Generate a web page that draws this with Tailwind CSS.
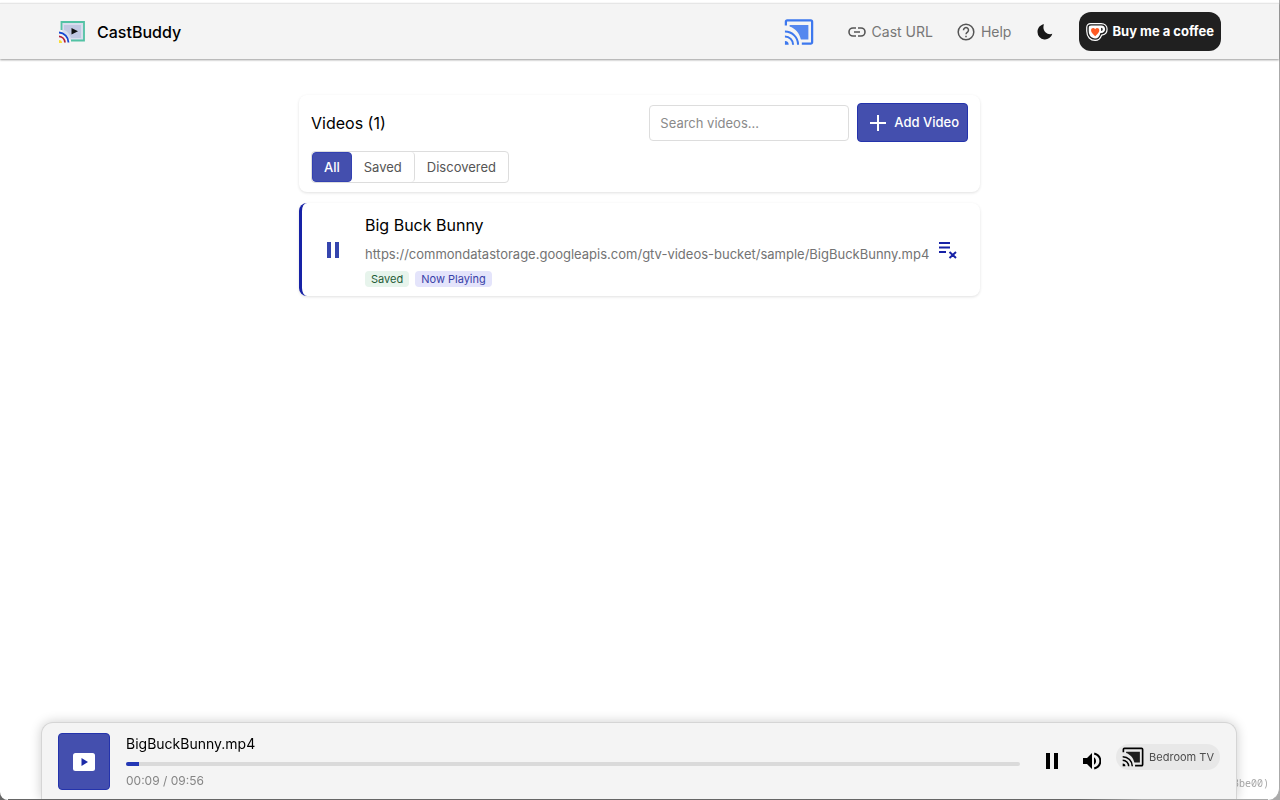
<!DOCTYPE html>
<html lang="en">
<head>
<meta charset="utf-8">
<meta name="viewport" content="width=device-width, initial-scale=1">
<title>CastBuddy</title>
<script src="https://cdn.jsdelivr.net/npm/@tailwindcss/browser@4"></script>
</head>
<body class="bg-linear-to-r from-[#666666] from-85% to-[#aaaaaa] to-90% font-['Inter',sans-serif] text-black">
<svg class="hidden">
  <symbol id="cast" viewBox="0 0 32 28">
    <path d="M2 7V3a1.500 1.500 0 0 1 1.500-1.500h25A1.500 1.500 0 0 1 30 3v22a1.500 1.500 0 0 1-1.500 1.500H19" fill="none" stroke="currentColor" stroke-width="2.400"/>
    <path d="M6 6.500h20V22h-8C16.500 15 12 10 6 8Z" fill="currentColor" opacity=".88"/>
    <path d="M1 23.500a4 4 0 0 1 4 4H1Z" fill="currentColor"/>
    <path d="M1 18.800a8.700 8.700 0 0 1 8.700 8.700M1 13.500a14 14 0 0 1 14 14" fill="none" stroke="currentColor" stroke-width="2.200"/>
  </symbol>
</svg>
<div class="flex min-h-screen flex-col rounded-br-xl rounded-bl-lg border-r border-r-[#aaaaaa] bg-white pt-[3px]">
  <header class="flex h-14 items-center justify-between border-t border-[#e6e6e6] bg-[#f4f4f4] pr-[58px] pl-[59px] shadow-[0_1px_2px_rgba(0,0,0,0.4)]">
    <a href="#" class="flex items-center gap-3 text-base font-medium">
      <svg class="h-[22px] w-[26px]" viewBox="0 0 26 22" fill="none">
        <path d="M2.500 9V1h22.500v18.500H12" fill="#d9dded" stroke="#52c2a4" stroke-width="1.800"/>
        <path d="M5 4h17v13H12C10 12 8 10 5 9Z" fill="#c1c8e2"/>
        <path d="m12.500 7 6.500 3.200-6.500 3.300Z" fill="#111"/>
        <path d="M0 10.500A11.500 11.500 0 0 1 10.500 22H0Z" fill="#f4f4f4"/>
        <path d="M0 11.500a10 10 0 0 1 9.500 10" stroke="#1747d1" stroke-width="1.800"/>
        <path d="M0 15.300a6.500 6.500 0 0 1 6 6.200" stroke="#b32037" stroke-width="1.800"/>
        <path d="M0 19a3 3 0 0 1 3 3H0Z" fill="#f9dc35"/>
      </svg>
      <span>CastBuddy</span>
    </a>
    <nav class="flex items-center text-sm text-[#777777]">
      <button type="button" aria-label="Cast" class="mr-[34px] text-[#3d78ee]"><svg class="h-7 w-[30px]"><use href="#cast"/></svg></button>
      <a href="#" class="mr-6 flex items-center gap-[6px]">
        <svg class="size-[18px]" viewBox="0 0 18 18" fill="none" stroke="#555" stroke-width="1.600"><path d="M8 5H5a4 4 0 0 0 0 8h3M10 5h3a4 4 0 0 1 0 8h-3M6 9h6"/></svg>
        <span>Cast URL</span>
      </a>
      <a href="#" class="mr-[26px] flex items-center gap-[6px]">
        <svg class="size-[18px]" viewBox="0 0 18 18" fill="none" stroke="#555" stroke-width="1.500"><circle cx="9" cy="9" r="7.800"/><path d="M6.500 7.200a2.500 2.500 0 1 1 4.200 1.700C9.500 9.800 9 10.200 9 11.200M9 12.700v1.600"/></svg>
        <span>Help</span>
      </a>
      <button type="button" aria-label="Dark mode" class="mr-[26px]"><svg class="size-4" viewBox="0 0 16 16"><path d="M7 .2C3 .8.500 4 .5 8a7.500 7.500 0 0 0 14.800 1.700C10.500 11.800 4.500 6.500 7 .2Z" fill="#171717"/></svg></button>
      <a href="#" class="flex h-[39px] items-center gap-1 rounded-xl bg-[#202020] px-[7px] text-[13px] font-bold text-white">
        <svg class="h-5 w-[22px]" viewBox="0 0 24 20"><path d="M5 .8h11.500C20.500.8 23 3.500 23 7s-2.500 6-6 6.500c-1.500 4-3.500 5.700-7 5.700C5 19.200.8 15.500.8 9V5C.8 2.300 2.500.8 5 .8Z" fill="#202020" stroke="#fff" stroke-width="1.300"/><path d="M5.500 3h11c2.800 0 4.300 1.800 4.300 4s-1.600 4-4.300 4h-.8c-.8 3.800-2.600 6-5.700 6-4 0-7-3-7-8V5.500C3 3.800 3.800 3 5.500 3Z" fill="#fff"/><path d="M16.500 5.300v3.500c2.300.1 2.300-3.500 0-3.500Z" fill="#202020"/><path d="M10 14.500C6.500 11.500 5.500 10 5.500 8.200c0-2.700 3.200-3.400 4.500-1.200 1.300-2.200 4.500-1.500 4.500 1.200 0 1.800-1 3.300-4.500 6.300Z" fill="#ff5b24"/></svg>
        <span>Buy me a coffee</span>
      </a>
    </nav>
  </header>

  <main class="mx-auto flex w-full max-w-[681px] grow flex-col gap-[11px] pt-9 pb-24">
    <section class="rounded-lg bg-white px-3 pt-2 pb-[9px] shadow-[0_1px_3px_rgba(0,0,0,0.12)]">
      <div class="flex items-center justify-between">
        <h1 class="text-base">Videos (1)</h1>
        <div class="flex items-center gap-2">
          <input type="search" aria-label="Search videos" placeholder="Search videos..." class="h-9 w-[200px] rounded border border-[#dddddd] bg-white px-[10px] text-[13px] placeholder:text-[#8a8a8a]">
          <button type="button" class="flex h-[39px] items-center gap-2 rounded border border-[#2433ac] bg-[#444fae] pt-px pr-2 pl-3 text-[13px] font-medium text-white">
            <svg class="size-4" viewBox="0 0 16 16" stroke="currentColor" stroke-width="2"><path d="M8 0v16M0 8h16"/></svg>
            <span>Add Video</span>
          </button>
        </div>
      </div>
      <div class="mt-[9px] inline-flex h-8 rounded border border-[#dddddd] text-[13px] text-[#555555]">
        <button type="button" class="rounded border border-[#3341b2] bg-[#444fae] px-[11px] pt-px font-medium text-white">All</button>
        <button type="button" class="rounded-r border-r border-[#dddddd] px-3 pt-px">Saved</button>
        <button type="button" class="px-3 pt-px">Discovered</button>
      </div>
    </section>

    <article class="flex items-center rounded-lg border-l-3 border-[#1722a6] bg-white pt-[10px] pr-[22px] pb-[9px] pl-6 shadow-[0_1px_3px_rgba(0,0,0,0.12)]">
      <button type="button" aria-label="Pause" class="mr-6"><svg class="h-4 w-[15px]" viewBox="0 0 15 16" fill="#3545ae"><path d="M1 0h4v16H1zM9 0h4v16H9z"/></svg></button>
      <div class="min-w-0 grow">
        <h2 class="text-base leading-6">Big Buck Bunny</h2>
        <p class="mt-[7px] text-[13px] leading-5 wrap-anywhere text-[#737373]">https://commondatastorage.googleapis.com/gtv-videos-bucket/sample/BigBuckBunny.mp4</p>
        <div class="mt-[7px] flex gap-[6px] text-[11px] leading-4">
          <span class="rounded bg-[#e7f4ec] px-[6px] text-[#245b36]">Saved</span>
          <span class="rounded bg-[#e4e4fb] px-[6px] text-[#3941a8]">Now Playing</span>
        </div>
      </div>
      <button type="button" aria-label="Remove from queue" class="ml-1"><svg class="h-[18px] w-5" viewBox="0 0 20 18" fill="none" stroke="#1722a6" stroke-width="2"><path d="M1 2h11M1 6.500h11M1 11h7M11.500 11l6.500 6M18 11l-6.500 6"/></svg></button>
    </article>
  </main>
</div>

<p class="fixed right-[11px] bottom-[9px] font-['Noto_Sans_Mono','DejaVu_Sans_Mono','Liberation_Mono',monospace] text-[10px] leading-4 text-[#aaaaaa]">3be00)</p>
<footer class="fixed right-[43px] bottom-px left-[41px] flex h-[77px] items-start rounded-t-xl border border-b-0 border-[#d5d5d5] bg-[#f4f4f4] px-4 pt-[10px] shadow-[0_0_12px_rgba(0,0,0,0.2)]">
  <div class="mr-4 flex h-[57px] w-[52px] shrink-0 items-center justify-center rounded border border-[#2433ac] bg-[#444fae]">
    <svg class="h-[18px] w-[22px]" viewBox="0 0 22 18"><rect width="22" height="18" rx="2.500" fill="#fff"/><path d="m8.500 5 6.500 4-6.500 4Z" fill="#1c2ba8"/></svg>
  </div>
  <div class="min-w-0 grow">
    <div class="text-sm leading-[22px]">BigBuckBunny.mp4</div>
    <div role="progressbar" aria-label="Playback position" aria-valuenow="2" class="mt-[7px] h-1 overflow-hidden rounded bg-[#dadada]"><div class="h-full bg-[#2337b5]" style="width:1.5%"></div></div>
    <div class="mt-[5px] text-xs leading-5 text-[#858585]">00:09 / 09:56</div>
  </div>
  <div class="ml-[25px] flex shrink-0 items-center pt-[11px]">
    <button type="button" aria-label="Pause" class="mt-2"><svg class="h-4 w-[14px]" viewBox="0 0 14 16"><path d="M1 0h4v16H1zM9 0h4v16H9z"/></svg></button>
    <button type="button" aria-label="Volume" class="mt-2 ml-6"><svg class="size-[18px]" viewBox="0 0 18 18"><path d="M0 6v6h4l5 5V1L4 6Z"/><path d="M11 5.200c2.700 1.800 2.700 5.800 0 7.600Z"/><path d="M11.200 1.500c8.200 2.500 8.200 12.500 0 15" fill="none" stroke="#000" stroke-width="1.900"/></svg></button>
    <button type="button" class="ml-[15px] flex h-[26px] items-center gap-[5px] rounded-full bg-[#e8e8e8] px-[6px] text-[11px] text-[#4d4d4d]">
      <svg class="h-5 w-[22px] text-black"><use href="#cast"/></svg>
      <span>Bedroom TV</span>
    </button>
  </div>
</footer>
<div class="fixed right-3 bottom-0 left-2 h-px bg-linear-to-r from-[#666666] from-85% to-[#aaaaaa] to-90%"></div>
</body>
</html>
